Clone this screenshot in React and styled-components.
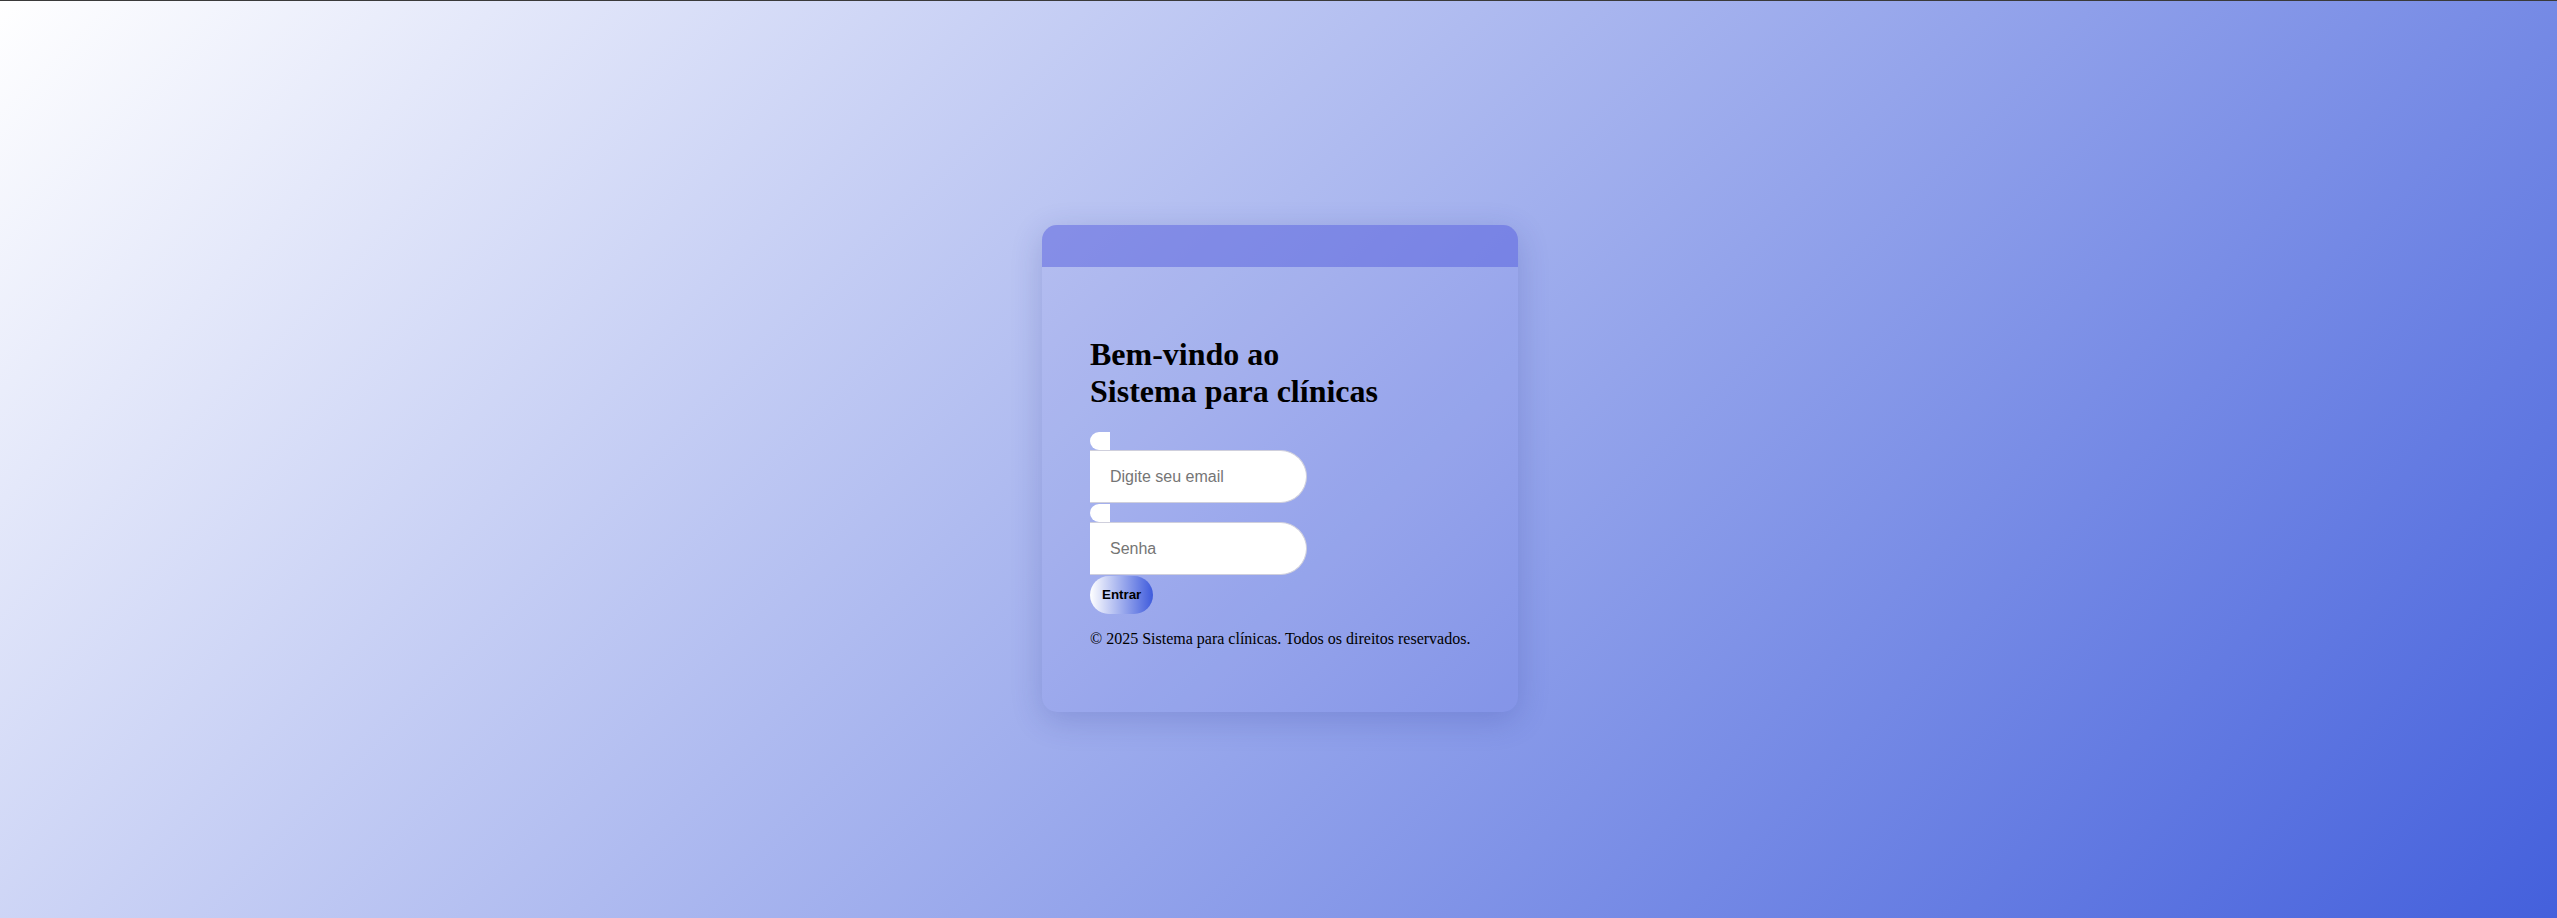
import React from "react";
import styled, { createGlobalStyle } from "styled-components";

const Global = createGlobalStyle`
  html, body {
    margin: 0;
    padding: 0;
  }
  body {
    font-family: "Liberation Serif", "Times New Roman", serif;
  }
`;

const Login = () => {
  return (
    <Pagina>
      <Global />
      <Cartao>
        <Topo />
        <Corpo>
          <Titulo>
            Bem-vindo ao
            <br />
            Sistema para clínicas
          </Titulo>
          <Formulario onSubmit={(e) => e.preventDefault()}>
            <Rotulo htmlFor="email" />
            <Campo id="email" type="email" placeholder="Digite seu email" />
            <Rotulo htmlFor="senha" />
            <Campo id="senha" type="password" placeholder="Senha" />
            <Botao type="submit">Entrar</Botao>
          </Formulario>
          <Rodape>© 2025 Sistema para clínicas. Todos os direitos reservados.</Rodape>
        </Corpo>
      </Cartao>
    </Pagina>
  );
};

export default Login;

const Pagina = styled.div`
  box-sizing: border-box;
  min-height: 100vh;
  border-top: 1px solid #3a3a3a;
  padding: 18px 0 0 3px;
  display: flex;
  justify-content: center;
  align-items: center;
  background: linear-gradient(135deg, #ffffff 0%, #4460dc 100%);
`;

const Cartao = styled.div`
  width: 476px;
  border-radius: 15px;
  overflow: hidden;
  background-color: rgba(80, 90, 222, 0.06);
  box-shadow: 0 8px 32px 0 rgba(31, 38, 135, 0.2);
`;

const Topo = styled.div`
  height: 42px;
  background-color: rgba(80, 90, 222, 0.47);
`;

const Corpo = styled.div`
  padding: 48px 48px 48px;
`;

const Titulo = styled.h1`
  font-family: "Liberation Serif", "Times New Roman", serif;
  font-size: 32px;
  font-weight: bold;
  margin: 21px 0 22px;
  color: #000;
`;

const Formulario = styled.form`
  display: flex;
  flex-direction: column;
  align-items: flex-start;
`;

const Rotulo = styled.label`
  display: block;
  width: 20px;
  height: 18px;
  background-color: #fff;
  border-radius: 10px 0 0 10px;
`;

const Campo = styled.input`
  box-sizing: border-box;
  width: 217px;
  height: 53px;
  margin-bottom: 1px;
  padding: 0 20px;
  border: 1px solid #cfcfdc;
  border-left: none;
  border-radius: 0 27px 27px 0;
  background-color: #fff;
  font-family: "Liberation Sans", Arial, sans-serif;
  font-size: 16px;
  outline: none;
  &::placeholder {
    color: #757575;
  }
`;

const Botao = styled.button`
  padding: 11px 12px;
  line-height: 16px;
  border: none;
  border-radius: 19px;
  background: linear-gradient(90deg, #ffffff 0%, #3f5bdc 100%);
  font-family: "Liberation Sans", Arial, sans-serif;
  font-size: 13.33px;
  font-weight: bold;
  color: #000;
  cursor: pointer;
`;

const Rodape = styled.p`
  margin: 16px 0;
  white-space: nowrap;
  font-family: "Liberation Serif", "Times New Roman", serif;
  font-size: 16px;
  color: #000;
`;
